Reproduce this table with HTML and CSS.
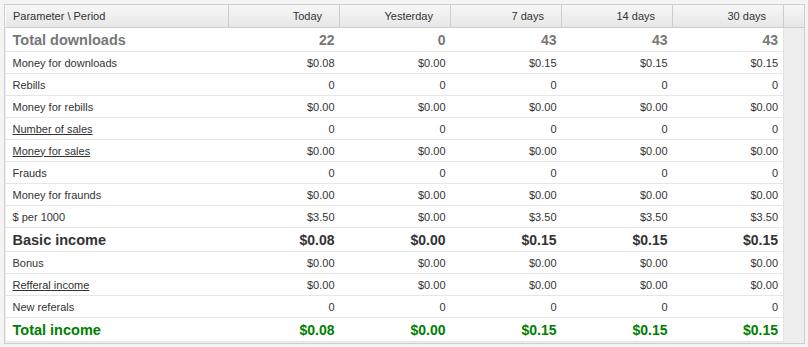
FILE: index.html
```html
<!DOCTYPE html>
<html>
<head>
<meta charset="utf-8">
<link rel="stylesheet" href="styles.css">
</head>
<body>
<div class="panel">
<table class="stats">
<colgroup>
<col class="c-label"><col class="c-val"><col class="c-val"><col class="c-val"><col class="c-val"><col class="c-val"><col class="c-fill">
</colgroup>
<thead>
<tr><th class="lbl">Parameter \ Period</th><th>Today</th><th>Yesterday</th><th>7 days</th><th>14 days</th><th>30 days</th><th class="fill"></th></tr>
</thead>
<tbody>
<tr class="big gray"><td class="lbl">Total downloads</td><td>22</td><td>0</td><td>43</td><td>43</td><td>43</td><td class="fill"></td></tr>
<tr><td class="lbl">Money for downloads</td><td>$0.08</td><td>$0.00</td><td>$0.15</td><td>$0.15</td><td>$0.15</td><td class="fill"></td></tr>
<tr><td class="lbl">Rebills</td><td>0</td><td>0</td><td>0</td><td>0</td><td>0</td><td class="fill"></td></tr>
<tr><td class="lbl">Money for rebills</td><td>$0.00</td><td>$0.00</td><td>$0.00</td><td>$0.00</td><td>$0.00</td><td class="fill"></td></tr>
<tr><td class="lbl"><a href="#">Number of sales</a></td><td>0</td><td>0</td><td>0</td><td>0</td><td>0</td><td class="fill"></td></tr>
<tr><td class="lbl"><a href="#">Money for sales</a></td><td>$0.00</td><td>$0.00</td><td>$0.00</td><td>$0.00</td><td>$0.00</td><td class="fill"></td></tr>
<tr><td class="lbl">Frauds</td><td>0</td><td>0</td><td>0</td><td>0</td><td>0</td><td class="fill"></td></tr>
<tr><td class="lbl">Money for fraunds</td><td>$0.00</td><td>$0.00</td><td>$0.00</td><td>$0.00</td><td>$0.00</td><td class="fill"></td></tr>
<tr><td class="lbl">$ per 1000</td><td>$3.50</td><td>$0.00</td><td>$3.50</td><td>$3.50</td><td>$3.50</td><td class="fill"></td></tr>
<tr class="big dark"><td class="lbl">Basic income</td><td>$0.08</td><td>$0.00</td><td>$0.15</td><td>$0.15</td><td>$0.15</td><td class="fill"></td></tr>
<tr><td class="lbl">Bonus</td><td>$0.00</td><td>$0.00</td><td>$0.00</td><td>$0.00</td><td>$0.00</td><td class="fill"></td></tr>
<tr><td class="lbl"><a href="#">Refferal income</a></td><td>$0.00</td><td>$0.00</td><td>$0.00</td><td>$0.00</td><td>$0.00</td><td class="fill"></td></tr>
<tr><td class="lbl">New referals</td><td>0</td><td>0</td><td>0</td><td>0</td><td>0</td><td class="fill"></td></tr>
<tr class="big green"><td class="lbl">Total income</td><td>$0.08</td><td>$0.00</td><td>$0.15</td><td>$0.15</td><td>$0.15</td><td class="fill"></td></tr>
</tbody>
</table>
</div>
</body>
</html>
```

FILE: styles.css
```css
html, body {
  margin: 0;
  padding: 0;
  background: #f4f4f4;
}
body {
  font-family: "Liberation Sans", Arial, sans-serif;
  font-size: 11px;
  color: #333;
}
.panel {
  margin: 4px 3px 3px 4px;
  height: 338px;
  border: 1px solid #cfcfcf;
  background: #eeeeee;
}
.stats {
  border-collapse: collapse;
  table-layout: fixed;
  width: 799px;
}
.c-label { width: 223px; }
.c-val { width: 111px; }
.c-fill { width: 21px; }
.stats th {
  height: 22px;
  padding: 0 17px 0 0;
  text-align: right;
  font-weight: normal;
  color: #333;
  background: linear-gradient(#f7f7f7, #e6e6e6);
  border-left: 1px solid #fbfbfb;
  border-right: 1px solid #cdcdcd;
  border-bottom: 1px solid #cdcdcd;
  white-space: nowrap;
}
.stats th.lbl {
  text-align: left;
  padding: 0 0 0 7px;
}
.stats td {
  height: 21px;
  padding: 0 5px 0 0;
  text-align: right;
  background: #fff;
  border-bottom: 1px solid #e6e6e6;
  white-space: nowrap;
}
.stats td.lbl {
  text-align: left;
  padding: 0 0 0 7px;
}
.stats td.fill {
  background: transparent;
  border: 0;
  border-left: 1px solid #e2e2e2;
}
.stats a {
  color: #333;
  text-decoration: underline;
}
.stats tr.big td {
  height: 23px;
  font-size: 14px;
  font-weight: bold;
}
.stats tr.big td.lbl { font-size: 14.5px; }
.stats tr.big td.fill { font-size: 11px; }
.gray td { color: #777; }
.dark td { color: #333; }
.green td { color: #008000; }
```
